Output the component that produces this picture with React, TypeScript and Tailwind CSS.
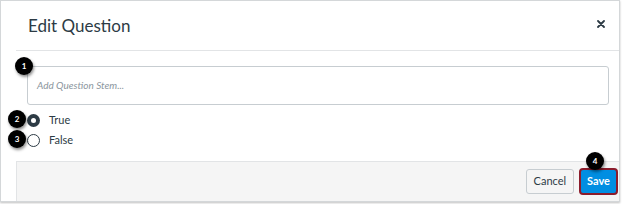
import React from 'react'

function Badge({ n, className }: { n: number; className: string }) {
  return (
    <span
      className={`absolute flex h-[18px] w-[18px] items-center justify-center rounded-full bg-black text-[8px] font-bold text-white shadow-[1px_2px_3px_rgba(0,0,0,0.45)] ${className}`}
    >
      {n}
    </span>
  )
}

function Radio({ checked, label }: { checked: boolean; label: string }) {
  return (
    <div className="flex h-[20px] items-center">
      {checked ? (
        <span className="flex h-[13px] w-[13px] items-center justify-center rounded-full bg-[#2d3b45]">
          <span className="h-[5px] w-[5px] rounded-full bg-white" />
        </span>
      ) : (
        <span className="h-[13px] w-[13px] rounded-full border border-[#2d3b45] bg-white" />
      )}
      <span className="ml-[9px] text-[11px] text-[#2d3b45]">{label}</span>
    </div>
  )
}

export default function App() {
  return (
    <div className="h-[204px] w-[624px] bg-white" style={{ fontFamily: 'Lato, "Noto Sans", sans-serif' }}>
      <div className="relative flex h-[202px] w-[620px] flex-col border border-[#d4d7d9] bg-white shadow-[0_1px_2px_rgba(0,0,0,0.25)]">
        <div className="ml-[15px] flex h-[50px] items-center justify-between border-b border-[#e2e4e6] pl-[12px] pr-[14px]">
          <h1 className="text-[17px] text-[#2d3b45]">Edit Question</h1>
          <svg width="8" height="8" viewBox="0 0 8 8" className="mt-[-3px]">
            <path d="M1 1 L7 7 M7 1 L1 7" stroke="#2d3b45" strokeWidth="1.8" strokeLinecap="round" />
          </svg>
        </div>

        <div className="ml-[15px] flex-1 pl-[11px] pr-[10px] pt-[15px]">
          <div className="flex h-[39px] items-center rounded-[3px] border border-[#c7cdd1] bg-white pl-[9px]">
            <span className="text-[10px] italic text-[#8b969e]">Add Question Stem...</span>
          </div>
          <div className="mt-[5px]">
            <Radio checked label="True" />
            <Radio checked={false} label="False" />
          </div>
        </div>

        <div className="ml-[15px] flex h-[40px] items-center justify-end gap-[5px] border-l border-t border-[#e2e4e6] bg-[#f5f5f5] pr-[1px]">
          <button className="h-[25px] rounded-[3px] border border-[#c7cdd1] bg-[#f5f5f5] px-[7px] text-[11px] text-[#2d3b45]">
            Cancel
          </button>
          <button className="h-[27px] rounded-[4px] border-2 border-[#8b1c2c] bg-[#008ee2] px-[6px] text-[11px] font-bold text-white">
            Save
          </button>
        </div>

        <Badge n={1} className="left-[14px] top-[56px]" />
        <Badge n={2} className="left-[7px] top-[109px]" />
        <Badge n={3} className="left-[7px] top-[129px]" />
        <Badge n={4} className="left-[585px] top-[151px]" />
      </div>
    </div>
  )
}
